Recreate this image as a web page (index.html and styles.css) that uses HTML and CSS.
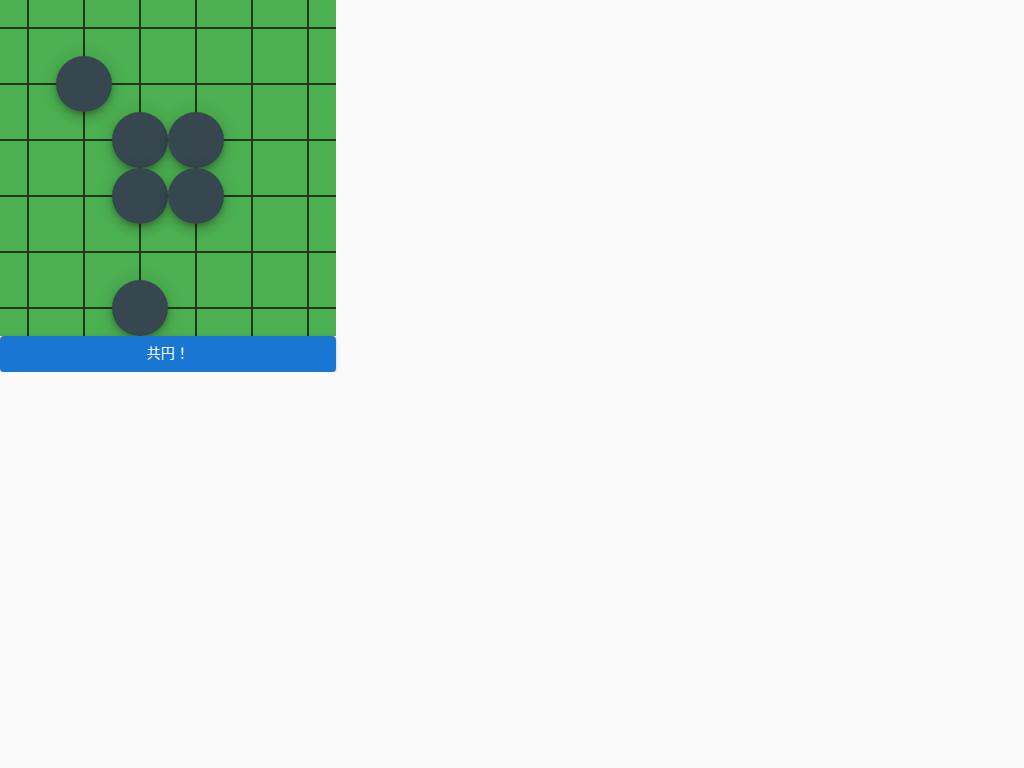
FILE: index.html
```html
<!DOCTYPE html>
<html lang="ja">
<head>
<meta charset="utf-8">
<title>共円</title>
<link rel="stylesheet" href="styles.css">
</head>
<body>
<div class="app">
  <div class="board">
    <div class="cell"></div><div class="cell"></div><div class="cell"></div><div class="cell"></div><div class="cell"></div><div class="cell"></div>
    <div class="cell"></div><div class="cell"><div class="stone"></div></div><div class="cell"></div><div class="cell"></div><div class="cell"></div><div class="cell"></div>
    <div class="cell"></div><div class="cell"></div><div class="cell"><div class="stone"></div></div><div class="cell"><div class="stone"></div></div><div class="cell"></div><div class="cell"></div>
    <div class="cell"></div><div class="cell"></div><div class="cell"><div class="stone"></div></div><div class="cell"><div class="stone"></div></div><div class="cell"></div><div class="cell"></div>
    <div class="cell"></div><div class="cell"></div><div class="cell"></div><div class="cell"></div><div class="cell"></div><div class="cell"></div>
    <div class="cell"></div><div class="cell"></div><div class="cell"><div class="stone"></div></div><div class="cell"></div><div class="cell"></div><div class="cell"></div>
  </div>
  <button class="btn" type="button">共円！</button>
</div>
</body>
</html>
```
FILE: styles.css
```css
html, body {
  margin: 0;
  padding: 0;
  background: #fafafa;
}
body {
  font-family: Roboto, "Noto Sans CJK JP", sans-serif;
}
.app {
  width: 336px;
  display: flex;
  flex-direction: column;
}
.board {
  display: grid;
  grid-template-columns: repeat(6, 56px);
  grid-template-rows: repeat(6, 56px);
  background: #4caf50;
}
.cell {
  position: relative;
}
.cell::before,
.cell::after {
  content: "";
  position: absolute;
  background: #1e3a1f;
}
.cell::before {
  left: 0;
  right: 0;
  top: 27px;
  height: 1.5px;
}
.cell::after {
  top: 0;
  bottom: 0;
  left: 27px;
  width: 1.5px;
}
.stone {
  position: relative;
  z-index: 1;
  width: 56px;
  height: 56px;
  border-radius: 50%;
  background: #37474f;
  box-shadow: 0 3px 5px -1px rgba(0,0,0,0.2), 0 6px 10px 0 rgba(0,0,0,0.14), 0 1px 18px 0 rgba(0,0,0,0.12);
}
.btn {
  height: 36px;
  width: 336px;
  border: none;
  margin: 0;
  padding: 0 16px 2px;
  border-radius: 4px;
  background: #1976d2;
  color: #fff;
  font-family: Roboto, "Noto Sans CJK JP", sans-serif;
  font-size: 14px;
  font-weight: 400;
  letter-spacing: 0.4px;
  line-height: 1.75;
  box-shadow: 0 3px 1px -2px rgba(0,0,0,0.2), 0 2px 2px 0 rgba(0,0,0,0.14), 0 1px 5px 0 rgba(0,0,0,0.12);
  position: relative;
  z-index: 2;
}
```
